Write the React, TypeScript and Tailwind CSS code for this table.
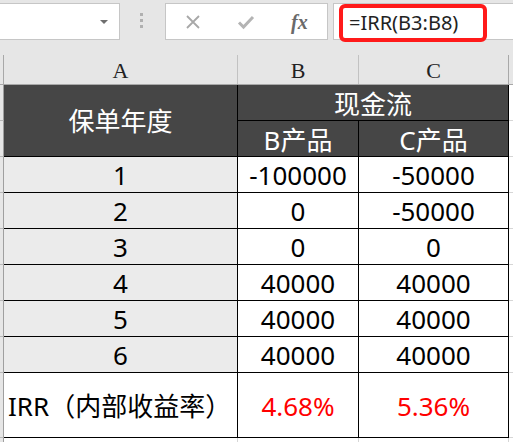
import React from "react";

const sans = { fontFamily: '"Noto Sans", "Noto Sans CJK SC", sans-serif' };

const rows = [
  { year: "1", b: "-100000", c: "-50000" },
  { year: "2", b: "0", c: "-50000" },
  { year: "3", b: "0", c: "0" },
  { year: "4", b: "40000", c: "40000" },
  { year: "5", b: "40000", c: "40000" },
  { year: "6", b: "40000", c: "40000" },
];

const Edge = () => <div className="bg-[#e6e6e6] border-r border-b border-r-[#9f9f9f] border-b-[#b8b8b8]" />;
const Tail = () => <div className="bg-white border-b border-[#d6d6d6]" />;

const App = () => {
  return (
    <div className="w-[513px] h-[442px] overflow-hidden bg-white text-black" style={sans}>
      {/* toolbar */}
      <div className="h-[55px] bg-[#e6e6e6] pt-[3px] flex items-start">
        <div className="w-[121px] h-[37px] ml-[-1px] bg-white border border-[#c6c6c6] flex items-center justify-end pr-[11px]">
          <div className="w-0 h-0 border-l-[4px] border-r-[4px] border-t-[4px] border-l-transparent border-r-transparent border-t-[#6f6f6f]" />
        </div>
        <div className="ml-[20px] mt-[10px] flex flex-col gap-[3px]">
          <div className="w-[3px] h-[3px] bg-[#b0b0b0]" />
          <div className="w-[3px] h-[3px] bg-[#b0b0b0]" />
          <div className="w-[3px] h-[3px] bg-[#b0b0b0]" />
        </div>
        <div className="ml-[22px] w-[163px] h-[37px] bg-white border border-[#c6c6c6] flex items-center">
          <svg width="16" height="16" viewBox="0 0 16 16" className="ml-[19px]">
            <path d="M2 2 L14 14 M14 2 L2 14" stroke="#a8a8a8" strokeWidth="1.8" fill="none" />
          </svg>
          <svg width="18" height="16" viewBox="0 0 18 16" className="ml-[36px]">
            <path d="M2 8.5 L6.5 13 L16 3" stroke="#b4b4b4" strokeWidth="3" fill="none" />
          </svg>
          <span className="ml-[36px] text-[20px] italic font-bold text-[#6a6a6a] leading-none" style={{ fontFamily: '"Liberation Serif", serif' }}>
            fx
          </span>
        </div>
        <div className="relative ml-[5px] flex-1 h-[37px] bg-white border border-[#c6c6c6] border-r-0">
          <div className="absolute left-[5px] top-0 w-[148px] h-[38px] border-[4px] border-[#ff1a1a] rounded-[6px] flex items-center pl-[6px]">
            <span className="text-[20px] leading-none text-[#222]">=IRR(B3:B8)</span>
          </div>
        </div>
      </div>

      {/* column headers */}
      <div
        className="grid grid-cols-[4px_234px_121px_150px_1fr] h-[30px] bg-[#e6e6e6] border-b border-[#a8a8a8] text-[22px] leading-none text-[#222]"
        style={{ fontFamily: '"Liberation Serif", serif' }}
      >
        <div className="border-r border-[#a8a8a8]" />
        <div className="border-r border-[#c2c2c2] flex items-center justify-center pt-[2px]">A</div>
        <div className="border-r border-[#c2c2c2] flex items-center justify-center pt-[2px]">B</div>
        <div className="border-r border-[#a8a8a8] flex items-center justify-center pt-[2px]">C</div>
        <div />
      </div>

      {/* sheet */}
      <div className="grid grid-cols-[4px_234px_121px_150px_1fr] grid-rows-[36px_36px_36px_36px_36px_36px_36px_36px_65px_10px] text-[26px] leading-none">
        <Edge />
        <div className="row-span-2 bg-[#464646] text-white border-r border-b border-black flex items-center justify-center">
          保单年度
        </div>
        <div className="col-span-2 bg-[#464646] text-white border-r border-b border-black flex items-center justify-center pt-[2px]">
          现金流
        </div>
        <Tail />
        <Edge />
        <div className="bg-[#464646] text-white border-r border-b border-black flex items-center justify-center pt-[2px]">
          B产品
        </div>
        <div className="bg-[#464646] text-white border-r border-b border-black flex items-center justify-center pt-[2px]">
          C产品
        </div>
        <Tail />

        {rows.map((r) => (
          <React.Fragment key={r.year}>
            <Edge />
            <div className="bg-[#ebebeb] border-r border-b border-black flex items-center justify-center">{r.year}</div>
            <div className="bg-white border-r border-b border-black flex items-center justify-center">{r.b}</div>
            <div className="bg-white border-r border-b border-black flex items-center justify-center">{r.c}</div>
            <Tail />
          </React.Fragment>
        ))}

        <Edge />
        <div className="bg-white border-r border-b border-black flex items-center pl-[4px] pt-[2px]">IRR（内部收益率）</div>
        <div className="bg-white border-r border-b border-black flex items-center justify-center text-[#ff0000] pt-[2px]">4.68%</div>
        <div className="bg-white border-r border-b border-black flex items-center justify-center text-[#ff0000] pt-[2px]">5.36%</div>
        <Tail />

        <div className="bg-[#e6e6e6] border-r border-[#9f9f9f]" />
        <div className="bg-white border-r border-[#d6d6d6]" />
        <div className="bg-white border-r border-[#d6d6d6]" />
        <div className="bg-white border-r border-[#d6d6d6]" />
        <div className="bg-white" />
      </div>
    </div>
  );
};

export default App;
